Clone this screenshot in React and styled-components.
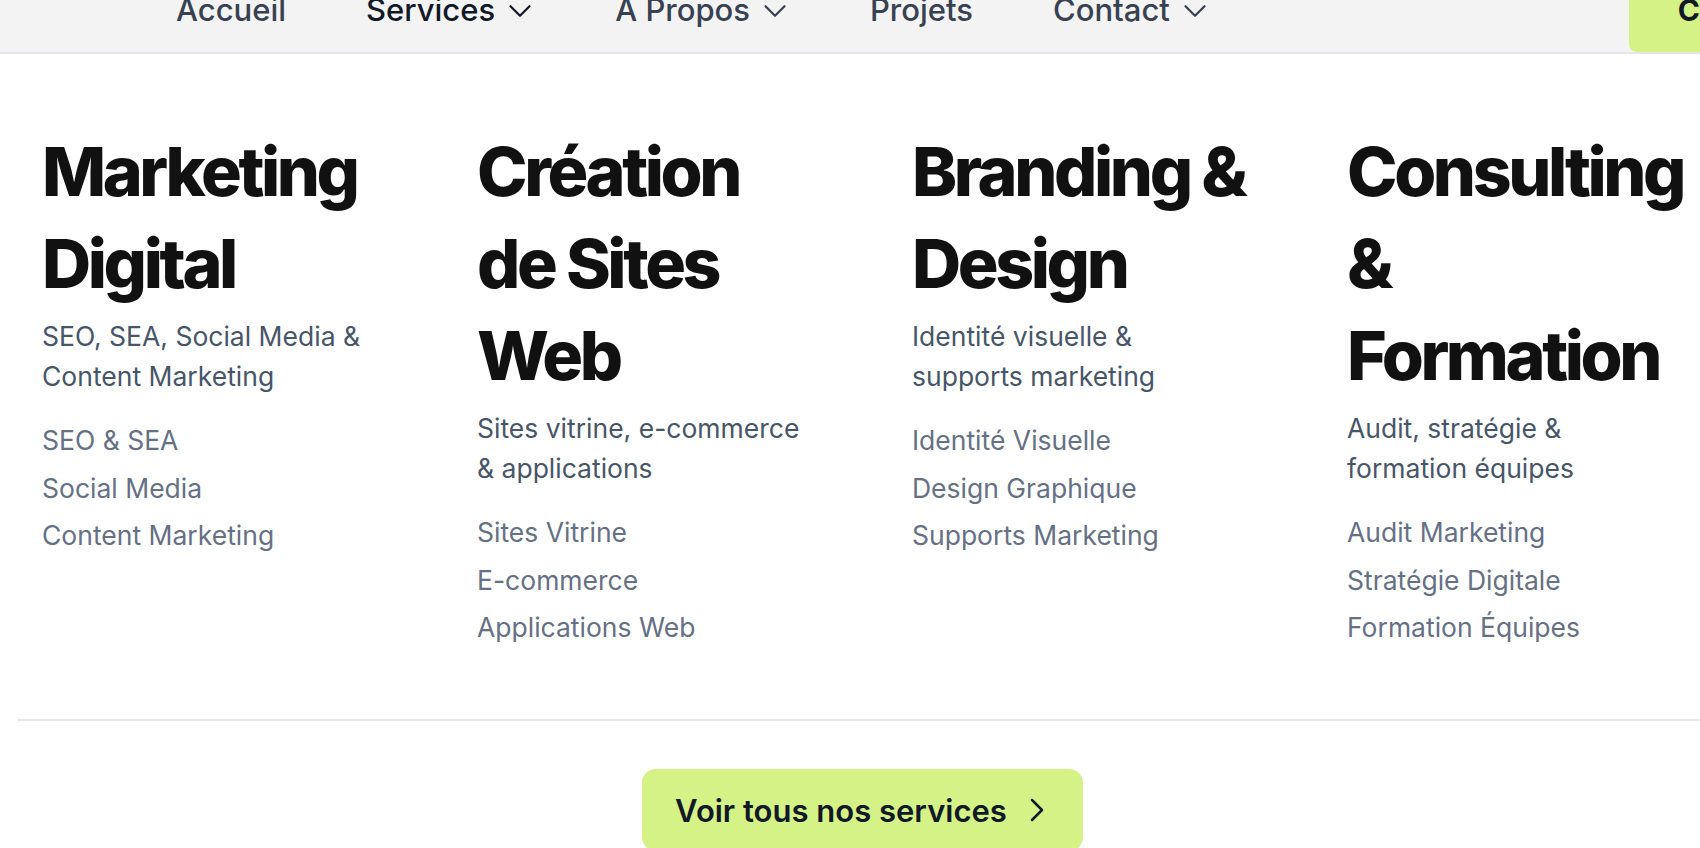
import React from 'react';
import styled, { createGlobalStyle } from 'styled-components';
import { ChevronDown, ChevronRight } from 'lucide-react';

const GlobalStyle = createGlobalStyle`
    html, body {
        margin: 0;
        padding: 0;
        background: #ffffff;
        font-family: 'Inter', 'Noto Sans', sans-serif;
        -webkit-font-smoothing: antialiased;
    }
    * {
        box-sizing: border-box;
    }
`;

const Viewport = styled.div`
    width: 100vw;
    height: 100vh;
    overflow: hidden;
    background: #ffffff;
`;

// the page is scrolled a little, the top of the header sits above the window
const ScrolledPage = styled.div`
    margin-top: -41px;
`;

const Header = styled.header`
    height: 95px;
    display: flex;
    align-items: center;
    padding: 9px 0 0 176px;
    background: #f3f3f3;
    border-bottom: 2px solid #e5e7eb;
    white-space: nowrap;
`;

const Nav = styled.nav`
    display: flex;
    align-items: center;
    flex-shrink: 0;
    gap: 80px;
`;

const NavItem = styled.a`
    display: flex;
    align-items: center;
    gap: 6px;
    font-size: 31px;
    line-height: 36px;
    font-weight: 500;
    color: ${props => (props.$active ? '#111827' : '#374151')};
    text-decoration: none;
    cursor: pointer;

    svg {
        margin: 2px -4px 0 0;
    }
`;

const HeaderCta = styled.a`
    align-self: stretch;
    flex-shrink: 0;
    display: flex;
    align-items: flex-end;
    margin-left: 419px;
    padding: 0 49px 24px;
    border-radius: 0 0 8px 8px;
    background: #d4f286;
    color: #111827;
    font-size: 30px;
    line-height: 36px;
    font-weight: 700;
    white-space: nowrap;
    text-decoration: none;
`;

const MegaPanel = styled.section`
    width: 1691px;
    margin-left: 17px;
    padding-top: 71px;
`;

const Columns = styled.div`
    display: grid;
    grid-template-columns: repeat(4, 345px);
    column-gap: 90px;
    padding: 0 25px;
    align-items: start;
`;

const Column = styled.div`
    display: flex;
    flex-direction: column;
`;

const Title = styled.h3`
    margin: 0;
    font-size: 68px;
    line-height: 92px;
    font-weight: 800;
    letter-spacing: -0.05em;
    color: #111111;
`;

const Summary = styled.p`
    margin: 7px 0 0;
    max-width: 332px;
    font-size: 26.5px;
    line-height: 40px;
    font-weight: 400;
    color: #475569;
`;

const LinkList = styled.ul`
    list-style: none;
    margin: 26px 0 0;
    padding: 0;
    display: flex;
    flex-direction: column;
    gap: 11.5px;
`;

const SubLink = styled.li`
    font-size: 26.5px;
    line-height: 36px;
    color: #667085;
    cursor: pointer;
`;

const Divider = styled.hr`
    margin: 74px 0 0;
    border: 0;
    height: 2px;
    background: #e5e7eb;
`;

const Footer = styled.div`
    display: flex;
    justify-content: center;
    padding-top: 48px;
`;

const AllServices = styled.button`
    display: flex;
    align-items: center;
    gap: 10px;
    height: 82px;
    padding: 0 26px 0 33px;
    border: 0;
    border-radius: 14px;
    background: #d4f286;
    color: #111827;
    font-family: inherit;
    font-size: 31px;
    font-weight: 600;
    cursor: pointer;
`;

const navItems = [
    { label: 'Accueil' },
    { label: 'Services', menu: true, active: true },
    { label: 'À Propos', menu: true },
    { label: 'Projets' },
    { label: 'Contact', menu: true }
];

const services = [
    {
        title: 'Marketing Digital',
        summary: 'SEO, SEA, Social Media & Content Marketing',
        links: ['SEO & SEA', 'Social Media', 'Content Marketing']
    },
    {
        title: 'Création de Sites Web',
        summary: 'Sites vitrine, e-commerce & applications',
        links: ['Sites Vitrine', 'E-commerce', 'Applications Web']
    },
    {
        title: 'Branding & Design',
        summary: 'Identité visuelle & supports marketing',
        links: ['Identité Visuelle', 'Design Graphique', 'Supports Marketing']
    },
    {
        title: 'Consulting & Formation',
        summary: 'Audit, stratégie & formation équipes',
        links: ['Audit Marketing', 'Stratégie Digitale', 'Formation Équipes']
    }
];

function App() {
    return (
        <Viewport>
            <GlobalStyle />
            <ScrolledPage>
                <Header>
                    <Nav>
                        {navItems.map(item => (
                            <NavItem key={item.label} $active={item.active}>
                                {item.label}
                                {item.menu && <ChevronDown size={38} strokeWidth={1.4} />}
                            </NavItem>
                        ))}
                    </Nav>
                    <HeaderCta>Contactez-nous</HeaderCta>
                </Header>

                <MegaPanel>
                    <Columns>
                        {services.map(service => (
                            <Column key={service.title}>
                                <Title>{service.title}</Title>
                                <Summary>{service.summary}</Summary>
                                <LinkList>
                                    {service.links.map(link => (
                                        <SubLink key={link}>{link}</SubLink>
                                    ))}
                                </LinkList>
                            </Column>
                        ))}
                    </Columns>
                    <Divider />
                    <Footer>
                        <AllServices>
                            Voir tous nos services
                            <ChevronRight size={40} strokeWidth={1.5} />
                        </AllServices>
                    </Footer>
                </MegaPanel>
            </ScrolledPage>
        </Viewport>
    );
}

export default App;
